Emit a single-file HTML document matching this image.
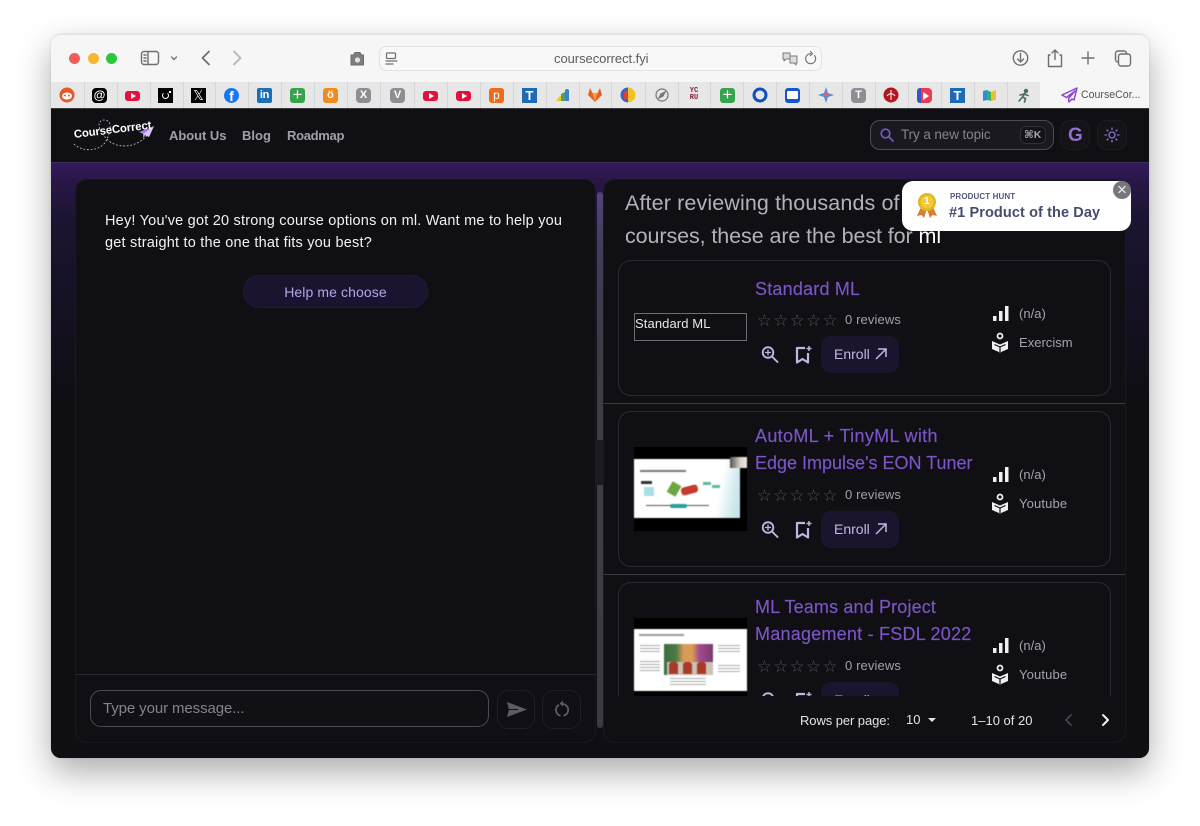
<!DOCTYPE html>
<html><head><meta charset="utf-8"><title>CourseCorrect</title>
<style>
*{box-sizing:border-box;margin:0;padding:0}
html,body{width:1200px;height:826px;overflow:hidden;background:#fff;font-family:"Liberation Sans","DejaVu Sans",sans-serif}
.a{position:absolute}
.t{position:absolute;white-space:nowrap}
#win{position:absolute;left:51px;top:34px;width:1098px;height:724px;border-radius:10px;box-shadow:0 14px 34px rgba(0,0,0,.33),0 0 2px rgba(0,0,0,.12)}
.title{color:#7c55c8;font-size:18px;letter-spacing:.05px;-webkit-text-stroke:.15px #7c55c8}
.rev{color:#a3a1a8;font-size:13px;letter-spacing:.12px}
.meta{color:#a5a3aa;font-size:13px;letter-spacing:.02px}
.stars{position:absolute;white-space:nowrap;color:#55545a;font-size:16.5px;letter-spacing:1.6px}
.card{position:absolute;left:618px;width:493px;border:1px solid #2b2a31;border-radius:13px;background:#100f14}
.enr{position:absolute;width:76px;height:35px;border-radius:9px;background:#1a142c;box-shadow:0 0 0 1px #1a1630;color:#c6b6e6;font-size:14px;letter-spacing:0;line-height:34px;padding-left:12px}
.fav{position:absolute;top:88px;width:15px;height:15px;border-radius:3px;color:#fff;font-size:11px;font-weight:bold;text-align:center;line-height:15px}
.sep{position:absolute;top:82px;width:1px;height:26px;background:#d6d6d6}
.blur{filter:blur(.6px)}
</style></head><body>
<div id="win"></div>

<!-- toolbar -->
<div class="a" style="left:51px;top:34px;width:1098px;height:48px;background:#f6f6f6;border-radius:10px 10px 0 0;border-top:1px solid #e2e2e2"></div>
<div class="a" style="left:51px;top:82px;width:989px;height:26px;background:#e7e7e7"></div>
<div class="a" style="left:1040px;top:82px;width:109px;height:26px;background:#f6f6f6"></div>
<div class="a" style="left:69px;top:53px;width:11px;height:11px;border-radius:50%;background:#ef5f58"></div>
<div class="a" style="left:88px;top:53px;width:11px;height:11px;border-radius:50%;background:#f5b72f"></div>
<div class="a" style="left:106px;top:53px;width:11px;height:11px;border-radius:50%;background:#2fc440"></div>

<svg class="a" style="left:0;top:0" width="1200" height="110" fill="none" stroke="#6f6f6f" stroke-width="1.4" stroke-linecap="round" stroke-linejoin="round">
 <rect x="141.5" y="51.5" width="17" height="13" rx="2.5"/><path d="M148 52v12M144 55h2M144 58h2M144 61h2"/>
 <path d="M171.500 57l2.500 2.500 2.500-2.500" stroke-width="1.3"/>
 <path d="M209 51.500l-6.500 6.500 6.500 6.500" stroke-width="1.8"/>
 <path d="M234 51.500l6.500 6.500-6.500 6.500" stroke="#b4b4b4" stroke-width="1.800"/>
 <path d="M351 55h2.500l1.500-2.500h5l1.500 2.500h2v10h-12.500z" fill="#7d7d7d" stroke="#6a6a6a" stroke-width="1"/><circle cx="357.500" cy="60" r="2.600" fill="#e2e2e2" stroke="none"/>
 <circle cx="1020.500" cy="58" r="7.200"/><path d="M1020.500 53.500v8.500M1017.500 59l3 3 3-3"/>
 <path d="M1050 55h-1.500v11.500h13V55H1060M1055 59.500V50M1052 53l3-3 3 3"/>
 <path d="M1088 52v12M1082 58h12"/>
 <rect x="1115.500" y="51" width="11" height="11" rx="2.500"/><rect x="1118.500" y="54" width="12" height="12" rx="2.500" fill="#f6f6f6"/>
</svg>
<div class="a" style="left:379px;top:46px;width:443px;height:25px;border:1px solid #e3e3e3;border-radius:7px;background:#f8f8f8"></div>
<svg class="a" style="left:0;top:0" width="1200" height="110" fill="none" stroke="#6f6f6f" stroke-width="1.200" stroke-linecap="round" stroke-linejoin="round">
 <rect x="386.500" y="53" width="9" height="5.500" rx="1"/><path d="M386 61h11M386 64h7"/>
 <path d="M783 53h7v6h-4l-2 2v-2h-1zM790 56h7v7h-1v2l-2-2h-4z" fill="#dcdcdc" stroke="#7a7a7a" stroke-width="1"/>
 <path d="M814.500 55.500a5 5 0 1 1-4-1.800M810.500 51.500l2 2.200-2.200 2" stroke-width="1.100"/>
</svg>
<div class="t" style="left:554px;top:51px;font-size:13px;color:#5c5c5c;letter-spacing:-.05px">coursecorrect.fyi</div>

<!-- separators -->
<div class="sep" style="left:84px"></div><div class="sep" style="left:117px"></div><div class="sep" style="left:150px"></div><div class="sep" style="left:183px"></div><div class="sep" style="left:215px"></div><div class="sep" style="left:248px"></div><div class="sep" style="left:281px"></div><div class="sep" style="left:314px"></div><div class="sep" style="left:347px"></div><div class="sep" style="left:380px"></div><div class="sep" style="left:414px"></div><div class="sep" style="left:447px"></div><div class="sep" style="left:480px"></div><div class="sep" style="left:513px"></div><div class="sep" style="left:546px"></div><div class="sep" style="left:579px"></div><div class="sep" style="left:611px"></div><div class="sep" style="left:645px"></div><div class="sep" style="left:678px"></div><div class="sep" style="left:710px"></div><div class="sep" style="left:743px"></div><div class="sep" style="left:776px"></div><div class="sep" style="left:809px"></div><div class="sep" style="left:842px"></div><div class="sep" style="left:875px"></div><div class="sep" style="left:908px"></div><div class="sep" style="left:941px"></div><div class="sep" style="left:974px"></div><div class="sep" style="left:1007px"></div>

<!-- favicons -->
<svg class="a" style="left:59px;top:87px" width="16" height="16" viewBox="0 0 16 16"><circle cx="8" cy="8" r="7.500" fill="#e8572a"/><ellipse cx="8" cy="9" rx="5" ry="3.500" fill="#fff"/><circle cx="6" cy="8.500" r="1" fill="#e8572a"/><circle cx="10" cy="8.500" r="1" fill="#e8572a"/></svg>
<div class="fav" style="left:92px;background:#000;border-radius:4px;font-size:12px;line-height:15px">@</div>
<div class="fav" style="left:125px;top:91px;height:10px;background:#e3103f"></div><div class="a" style="left:131px;top:93px;border-left:5px solid #fff;border-top:3px solid transparent;border-bottom:3px solid transparent"></div>
<div class="fav" style="left:158px;background:#000;border-radius:0"></div><div class="a" style="left:162px;top:92px;width:7px;height:7px;border:1px solid #fff;border-radius:50%;border-top-color:transparent"></div><div class="a" style="left:169px;top:91px;width:2px;height:2px;background:#fff"></div>
<div class="fav" style="left:191px;background:#000;border-radius:0;font-weight:normal;font-size:13px">𝕏</div>
<div class="fav" style="left:224px;background:#1877f2;border-radius:50%;font-size:14px;line-height:17px;overflow:hidden">f</div>
<div class="fav" style="left:257px;background:#1c6fb5;border-radius:2px;font-size:11px;letter-spacing:-.3px">in</div>
<div class="fav" style="left:290px;background:#37a34e;font-weight:normal;font-size:17px;line-height:14px">+</div>
<div class="fav" style="left:323px;background:#f18a1f;font-size:11px">ö</div>
<div class="fav" style="left:356px;background:#8d8d93;border-radius:4px">X</div>
<div class="fav" style="left:390px;background:#8d8d93;border-radius:4px">V</div>
<div class="fav" style="left:423px;top:91px;height:10px;background:#e3103f"></div><div class="a" style="left:429px;top:93px;border-left:5px solid #fff;border-top:3px solid transparent;border-bottom:3px solid transparent"></div>
<div class="fav" style="left:456px;top:91px;height:10px;background:#e3103f"></div><div class="a" style="left:462px;top:93px;border-left:5px solid #fff;border-top:3px solid transparent;border-bottom:3px solid transparent"></div>
<div class="fav" style="left:489px;background:#ec6c1c;font-weight:normal;font-size:12px">p</div>
<div class="fav" style="left:522px;background:#1f6ab4;border-radius:0;font-size:13px">T</div>
<svg class="a" style="left:555px;top:87px" width="16" height="16"><path d="M1 14l4-5 3 1v4z" fill="#f2c230"/><path d="M6 14V7l4-2v9z" fill="#4aa35a"/><path d="M10 14V3q2-2 4 0v11z" fill="#3f7fd8"/></svg>
<svg class="a" style="left:587px;top:87px" width="16" height="16"><path d="M3 1l2.500 5h5L13 1l2 7-7 7-7-7z" fill="#e6612a"/><path d="M5.500 6h5L8 14.500z" fill="#f8a03b"/></svg>
<svg class="a" style="left:620px;top:87px" width="16" height="16"><circle cx="8" cy="8" r="7.500" fill="#f3c21f"/><path d="M8 .5a7.500 7.500 0 0 0 0 15z" fill="#3c63c9"/><path d="M4 4h4v8H4z" fill="#d8433e"/></svg>
<svg class="a" style="left:654px;top:87px" width="16" height="16" fill="none" stroke="#777" stroke-width="1.200"><circle cx="8" cy="8" r="6"/><path d="M11 5L9 9 5 11l2-4z" fill="#777"/></svg>
<div class="t" style="left:688px;top:88px;font-size:7px;line-height:7px;color:#8b1d33;font-family:'Liberation Mono',monospace;font-weight:bold;width:12px;text-align:center;white-space:normal">YC<br>RU</div>
<div class="fav" style="left:720px;background:#37a34e;font-weight:normal;font-size:17px;line-height:14px">+</div>
<svg class="a" style="left:752px;top:87px" width="16" height="16" fill="none"><circle cx="8" cy="8" r="6" stroke="#0f4fc2" stroke-width="3"/></svg>
<div class="a" style="left:785px;top:88px;width:15px;height:15px;border-radius:3px;background:#1556c9;border:2px solid #1556c9;border-bottom-width:3px"><div style="height:8px;margin-top:1px;background:#fff;border-radius:1px"></div></div>
<svg class="a" style="left:818px;top:87px" width="16" height="16"><path d="M8 0l2 6 6 2-6 2-2 6-2-6-6-2 6-2z" fill="#4a8ee8"/><path d="M8 4l1 3 3 1-3 1-1 3-1-3-3-1 3-1z" fill="#e8605a"/></svg>
<div class="fav" style="left:851px;background:#8d8d93;border-radius:4px">T</div>
<svg class="a" style="left:883px;top:87px" width="16" height="16"><circle cx="8" cy="8" r="7.500" fill="#b3161e"/><path d="M8 3v10M4 9c2-3 6-3 8 0" stroke="#fff" fill="none"/></svg>
<div class="fav" style="left:917px;background:#e83c54;border-radius:4px"></div><div class="a" style="left:917px;top:88px;width:4px;height:15px;background:#3756c6;border-radius:3px 0 0 3px"></div><div class="a" style="left:923px;top:92px;border-left:6px solid #fff;border-top:4px solid transparent;border-bottom:4px solid transparent"></div>
<div class="fav" style="left:950px;background:#1f6ab4;border-radius:0;font-size:13px">T</div>
<svg class="a" style="left:982px;top:88px" width="16" height="14"><path d="M1 3l4-1v10l-4 1z" fill="#2d8fd8"/><path d="M5 2l4 2v9l-4-1z" fill="#3dae63"/><path d="M9 4l5-2v10l-5 1z" fill="#efbf30"/></svg>
<svg class="a" style="left:1016px;top:88px" width="15" height="15" fill="none" stroke="#4a6a60" stroke-width="1.600" stroke-linecap="round"><circle cx="10" cy="3" r="1.400" fill="#4a6a60"/><path d="M9 5L6.500 9l3 1.500-1 3.500M6.500 9L3 13M8 6l4 1.500M8 6L4 7"/></svg>
<svg class="a" style="left:1061px;top:87px" width="17" height="16" fill="none" stroke="#8a45d8" stroke-width="1.500" stroke-linejoin="round"><path d="M16 1L1 8l4.500 2.500L14 4l-6.500 7.500L8 15l3-3 2 1z"/></svg>
<div class="t" style="left:1081px;top:89px;font-size:10.6px;color:#555;letter-spacing:0">CourseCor...</div>

<!-- app header -->
<div class="a" style="left:51px;top:108px;width:1098px;height:650px;background:#100f14;border-radius:0 0 10px 10px;overflow:hidden">
 <div class="a" style="left:0;top:54px;width:1098px;height:596px;background:linear-gradient(180deg,#331b60 0,#291748 18px,#1b1430 60px,#0f0e13 240px)"></div>
 <div class="a" style="left:0;top:54px;width:1098px;height:1px;background:#3a2f52"></div>
</div>
<div class="a" style="left:51px;top:108px;width:1098px;height:1px;background:#3a3a3e"></div>

<!-- logo -->
<svg class="a" style="left:70px;top:117px" width="90" height="38" fill="none"><path d="M4 27C12 35 30 35 36 24 42 12 42 3 34 3 26 3 28 14 37 22 44 31 68 34 80 14" stroke="#cfcfd6" stroke-width=".8" stroke-dasharray="1.800 1.800"/><path d="M84 9L69 15l4 2 0 4 3-3 3 2z" fill="#a377e8"/><path d="M84 9L73 17l6 3z" fill="#d9c6f7"/></svg>
<div class="t" style="left:74px;top:129px;color:#fff;font-size:11.3px;font-weight:bold;transform:rotate(-7deg);transform-origin:left center;letter-spacing:-.1px">CourseCorrect</div>

<div class="t" style="left:169px;top:128px;font-size:13px;font-weight:bold;color:#a1a0a8;letter-spacing:-.05px">About Us</div>
<div class="t" style="left:242px;top:128px;font-size:13px;font-weight:bold;color:#a1a0a8;letter-spacing:0">Blog</div>
<div class="t" style="left:287px;top:128px;font-size:13px;font-weight:bold;color:#a1a0a8;letter-spacing:-.3px">Roadmap</div>

<!-- search -->
<div class="a" style="left:870px;top:120px;width:184px;height:30px;border:1px solid #4c4b52;border-radius:10px;background:#1a1920"></div>
<svg class="a" style="left:879px;top:127px" width="16" height="16" fill="none" stroke="#7d55c7" stroke-width="1.700" stroke-linecap="round"><circle cx="6.500" cy="6.500" r="4.300"/><path d="M10 10l4 4"/></svg>
<div class="t" style="left:901px;top:127px;font-size:13.5px;color:#85848b;letter-spacing:-.1px">Try a new topic</div>
<div class="a" style="left:1020px;top:126px;width:26px;height:18px;border:1px solid #302f36;border-radius:6px;background:#141318"></div>
<div class="t" style="left:1024px;top:129px;font-size:10.5px;font-weight:bold;color:#a8a7ae">⌘K</div>
<div class="a" style="left:1060px;top:120px;width:30px;height:30px;border:1px solid #1c1b21;border-radius:10px;background:#141318"></div>
<div class="t" style="left:1068px;top:125px;font-size:19px;font-weight:bold;color:#8f6fd0">G</div>
<div class="a" style="left:1097px;top:120px;width:30px;height:30px;border:1px solid #1c1b21;border-radius:10px;background:#141318"></div>
<svg class="a" style="left:1103px;top:126px" width="18" height="18" fill="none" stroke="#8f6fd0" stroke-width="1.300" stroke-linecap="round"><circle cx="9" cy="9" r="3"/><path d="M9 2v1.500M9 14.500V16M2 9h1.500M14.500 9H16M4 4l1 1M13 13l1 1M4 14l1-1M13 5l1-1"/></svg>

<!-- left panel -->
<div class="a" style="left:75px;top:179px;width:521px;height:564px;background:#100f14;border:1px solid #1a1920;border-radius:12px"></div>
<div class="t" style="left:105px;top:210px;width:480px;white-space:normal;color:#f2f2f4;font-size:14.5px;line-height:22px;letter-spacing:.21px">Hey! You've got 20 strong course options on ml. Want me to help you<br>get straight to the one that fits you best?</div>
<div class="a" style="left:244px;top:276px;width:183px;height:31px;border-radius:15px;background:#1a1430;box-shadow:0 0 0 1px #1f1a38"></div>
<div class="t" style="left:244px;width:183px;top:284px;text-align:center;color:#b9a3e6;font-size:14px;letter-spacing:.1px">Help me choose</div>
<div class="a" style="left:76px;top:674px;width:519px;height:1px;background:#2a2930"></div>
<div class="a" style="left:90px;top:690px;width:399px;height:37px;border:1px solid #4c4b52;border-radius:11px;background:#111015"></div>
<div class="t" style="left:103px;top:700px;font-size:15px;color:#85848b;letter-spacing:-.1px">Type your message...</div>
<div class="a" style="left:497px;top:690px;width:38px;height:39px;border:1px solid #1f1e25;border-radius:11px"></div>
<svg class="a" style="left:506px;top:701px" width="22" height="17"><path d="M1 1l20 7.500-20 7.500 2-7.500-2-7.500z" fill="#5d5c62"/><path d="M3 8.500h9" stroke="#100f14" stroke-width="1"/></svg>
<div class="a" style="left:542px;top:690px;width:39px;height:39px;border:1px solid #1f1e25;border-radius:11px"></div>
<svg class="a" style="left:553px;top:699px" width="18" height="20" fill="none" stroke="#5d5c62" stroke-width="1.800"><path d="M10 5A6 6 0 0 1 10.500 16.800M7.500 16.800A6 6 0 0 1 6 5.800"/><path d="M10 1.500L6.500 4.500 10 7.500z" fill="#5d5c62" stroke="none"/></svg>

<!-- divider scrollbar -->
<div class="a" style="left:597px;top:192px;width:6px;height:536px;background:linear-gradient(180deg,#53447e 0,#443d5c 50px,#3d3c45 150px,#3c3b42 100%);border-radius:3px"></div>
<div class="a" style="left:596px;top:440px;width:7px;height:45px;background:#1b1a20"></div>

<!-- right panel -->
<div class="a" style="left:603px;top:179px;width:523px;height:564px;background:#100f14;border:1px solid #1a1920;border-radius:12px"></div>
<div class="t" style="left:625px;top:187px;font-size:21.5px;line-height:33px;color:#b3b2b8;white-space:nowrap;letter-spacing:.12px">After reviewing thousands of<br><span style="letter-spacing:-.09px">courses, these are the best for <span style="color:#fff">ml</span></span></div>

<div class="a" style="left:604px;top:260px;width:521px;height:436px;overflow:hidden" id="list">
 <div class="a" style="left:0;top:143px;width:521px;height:1px;background:#3b3a40"></div>
 <div class="a" style="left:0;top:314px;width:521px;height:1px;background:#3b3a40"></div>
 <div class="card" style="left:14px;top:0;height:136px"></div>
 <div class="card" style="left:14px;top:151px;height:156px"></div>
 <div class="card" style="left:14px;top:322px;height:156px"></div>

 <!-- card 1 -->
 <div class="a" style="left:30px;top:53px;width:113px;height:28px;border:1px solid #6d6c72;color:#e9e9ea;font-size:13px;line-height:20px;letter-spacing:.1px">Standard ML</div>
 <div class="t title" style="left:151px;top:19px;letter-spacing:.2px">Standard ML</div>
 <div class="stars" style="left:153px;top:51px">☆☆☆☆☆</div>
 <div class="t rev" style="left:241px;top:52px">0 reviews</div>
 <svg class="a" style="left:156px;top:85px" width="20" height="20" fill="none" stroke="#c3b5e2" stroke-width="1.900" stroke-linecap="round"><circle cx="8" cy="7.500" r="5.300"/><path d="M12 11.500l5.500 5.500"/><path d="M8 5v5M5.500 7.500h5" stroke-width="1.300"/></svg>
 <svg class="a" style="left:191px;top:85px" width="18" height="20" fill="none" stroke="#c3b5e2" stroke-width="2.200" stroke-linejoin="round"><path d="M10 3H2v14.500l5.500-3.500 5.500 3.500V8"/><path d="M14 1v5M11.500 3.500h5" stroke-width="1.500"/></svg>
 <div class="enr" style="left:218px;top:77px">Enroll</div>
 <svg class="a" style="left:270px;top:87px" width="14" height="14" fill="none" stroke="#c6b6e6" stroke-width="1.500"><path d="M2 12L12 2M4 2h8v8"/></svg>
 <svg class="a" style="left:388px;top:45px" width="18" height="17"><rect x="1" y="11" width="3.500" height="5" fill="#f0f0f2"/><rect x="7" y="6" width="3.500" height="10" fill="#f0f0f2"/><rect x="13" y="1" width="3.500" height="15" fill="#f0f0f2"/></svg>
 <div class="t meta" style="left:415px;top:46px">(n/a)</div>
 <svg class="a" style="left:387px;top:72px" width="18" height="21"><circle cx="9" cy="4" r="2.500" fill="none" stroke="#f0f0f2" stroke-width="1.800"/><path d="M1 9l8 3.500L17 9v8l-8 3.500L1 17z" fill="#f0f0f2"/><path d="M3.500 12.500L9 15l5.500-2.500M9 15v5" fill="none" stroke="#100f14" stroke-width="1.200"/></svg>
 <div class="t meta" style="left:415px;top:75px">Exercism</div>

 <!-- card 2 -->
 <div class="a" style="left:30px;top:187px;width:113px;height:84px;background:#000"></div>
 <div class="a blur" style="left:30px;top:199px;width:106px;height:59px;background:#fff;overflow:hidden">
  <div class="a" style="right:-3px;top:0;width:30px;height:59px;background:linear-gradient(100deg,#fff 30%,#cfe9ec 70%,#bfe0ea)"></div>
  <div class="a" style="left:6px;top:11px;width:46px;height:2px;background:#777"></div>
  <div class="a" style="left:7px;top:22px;width:11px;height:3px;background:#333"></div>
  <div class="a" style="left:10px;top:28px;width:10px;height:9px;background:#a8dfe4"></div>
  <div class="a" style="left:35px;top:24px;width:10px;height:12px;background:#6da53e;transform:rotate(30deg)"></div>
  <div class="a" style="left:47px;top:27px;width:17px;height:8px;background:#c53b2c;border-radius:3px;transform:rotate(-15deg)"></div>
  <div class="a" style="left:69px;top:23px;width:8px;height:3px;background:#5fb89a"></div>
  <div class="a" style="left:78px;top:26px;width:8px;height:3px;background:#5fb89a"></div>
  <div class="a" style="left:12px;top:46px;width:63px;height:1px;background:#555"></div>
  <div class="a" style="left:36px;top:45px;width:17px;height:4px;background:#2a9d9d;border-radius:2px"></div>
 </div>
 <div class="a blur" style="left:126px;top:197px;width:17px;height:11px;background:linear-gradient(90deg,#55504c,#d7d2ca 60%,#ece9e3)"></div>
 <div class="t title" style="left:151px;top:163px;line-height:27px;letter-spacing:0"><span style="letter-spacing:.33px">AutoML + TinyML with</span><br>Edge Impulse's EON Tuner</div>
 <div class="stars" style="left:153px;top:226px">☆☆☆☆☆</div>
 <div class="t rev" style="left:241px;top:227px">0 reviews</div>
 <svg class="a" style="left:156px;top:260px" width="20" height="20" fill="none" stroke="#c3b5e2" stroke-width="1.900" stroke-linecap="round"><circle cx="8" cy="7.500" r="5.300"/><path d="M12 11.500l5.500 5.500"/><path d="M8 5v5M5.500 7.500h5" stroke-width="1.300"/></svg>
 <svg class="a" style="left:191px;top:260px" width="18" height="20" fill="none" stroke="#c3b5e2" stroke-width="2.200" stroke-linejoin="round"><path d="M10 3H2v14.500l5.500-3.500 5.500 3.500V8"/><path d="M14 1v5M11.500 3.500h5" stroke-width="1.500"/></svg>
 <div class="enr" style="left:218px;top:252px">Enroll</div>
 <svg class="a" style="left:270px;top:262px" width="14" height="14" fill="none" stroke="#c6b6e6" stroke-width="1.500"><path d="M2 12L12 2M4 2h8v8"/></svg>
 <svg class="a" style="left:388px;top:206px" width="18" height="17"><rect x="1" y="11" width="3.500" height="5" fill="#f0f0f2"/><rect x="7" y="6" width="3.500" height="10" fill="#f0f0f2"/><rect x="13" y="1" width="3.500" height="15" fill="#f0f0f2"/></svg>
 <div class="t meta" style="left:415px;top:207px">(n/a)</div>
 <svg class="a" style="left:387px;top:233px" width="18" height="21"><circle cx="9" cy="4" r="2.500" fill="none" stroke="#f0f0f2" stroke-width="1.800"/><path d="M1 9l8 3.500L17 9v8l-8 3.500L1 17z" fill="#f0f0f2"/><path d="M3.500 12.500L9 15l5.500-2.500M9 15v5" fill="none" stroke="#100f14" stroke-width="1.200"/></svg>
 <div class="t meta" style="left:415px;top:236px;letter-spacing:.15px">Youtube</div>

 <!-- card 3 -->
 <div class="a" style="left:30px;top:358px;width:113px;height:78px;background:#000"></div>
 <div class="a blur" style="left:30px;top:369px;width:113px;height:62px;background:#fff;overflow:hidden">
  <div class="a" style="left:5px;top:5px;width:45px;height:2px;background:#999"></div>
  <div class="a" style="left:30px;top:15px;width:49px;height:31px;background:linear-gradient(90deg,#3e6d3e 0,#4d7a45 25%,#d99b55 40%,#d99b55 58%,#a34b8c 72%,#7a3a70)"></div>
  <div class="a" style="left:33px;top:33px;width:46px;height:13px;background:#c9c2b6"></div>
  <div class="a" style="left:35px;top:33px;width:9px;height:12px;background:#a83a26;border-radius:3px 3px 0 0"></div>
  <div class="a" style="left:49px;top:33px;width:9px;height:12px;background:#a83a26;border-radius:3px 3px 0 0"></div>
  <div class="a" style="left:63px;top:33px;width:9px;height:12px;background:#a83a26;border-radius:3px 3px 0 0"></div>
  <div class="a" style="left:6px;top:16px;width:20px;height:9px;background:repeating-linear-gradient(180deg,#aaa 0,#aaa 1px,#fff 1px,#fff 3px)"></div>
  <div class="a" style="left:6px;top:32px;width:20px;height:12px;background:repeating-linear-gradient(180deg,#aaa 0,#aaa 1px,#fff 1px,#fff 3px)"></div>
  <div class="a" style="left:84px;top:16px;width:22px;height:9px;background:repeating-linear-gradient(180deg,#aaa 0,#aaa 1px,#fff 1px,#fff 3px)"></div>
  <div class="a" style="left:84px;top:36px;width:22px;height:7px;background:repeating-linear-gradient(180deg,#aaa 0,#aaa 1px,#fff 1px,#fff 3px)"></div>
  <div class="a" style="left:36px;top:49px;width:36px;height:9px;background:repeating-linear-gradient(180deg,#aaa 0,#aaa 1px,#fff 1px,#fff 3px)"></div>
 </div>
 <div class="t title" style="left:151px;top:334px;line-height:27px;letter-spacing:.15px">ML Teams and Project<br><span style="letter-spacing:.23px">Management - FSDL 2022</span></div>
 <div class="stars" style="left:153px;top:397px">☆☆☆☆☆</div>
 <div class="t rev" style="left:241px;top:398px">0 reviews</div>
 <svg class="a" style="left:156px;top:431px" width="20" height="20" fill="none" stroke="#c3b5e2" stroke-width="1.900" stroke-linecap="round"><circle cx="8" cy="7.500" r="5.300"/><path d="M12 11.500l5.500 5.500"/></svg>
 <svg class="a" style="left:191px;top:431px" width="18" height="20" fill="none" stroke="#c3b5e2" stroke-width="2.200" stroke-linejoin="round"><path d="M10 3H2v14.500l5.500-3.500 5.500 3.500V8"/><path d="M14 1v5M11.500 3.500h5" stroke-width="1.500"/></svg>
 <div class="enr" style="left:218px;top:423px">Enroll</div>
 <svg class="a" style="left:388px;top:377px" width="18" height="17"><rect x="1" y="11" width="3.500" height="5" fill="#f0f0f2"/><rect x="7" y="6" width="3.500" height="10" fill="#f0f0f2"/><rect x="13" y="1" width="3.500" height="15" fill="#f0f0f2"/></svg>
 <div class="t meta" style="left:415px;top:378px">(n/a)</div>
 <svg class="a" style="left:387px;top:404px" width="18" height="21"><circle cx="9" cy="4" r="2.500" fill="none" stroke="#f0f0f2" stroke-width="1.800"/><path d="M1 9l8 3.500L17 9v8l-8 3.500L1 17z" fill="#f0f0f2"/><path d="M3.500 12.500L9 15l5.500-2.500M9 15v5" fill="none" stroke="#100f14" stroke-width="1.200"/></svg>
 <div class="t meta" style="left:415px;top:407px;letter-spacing:.15px">Youtube</div>
</div>

<!-- pagination -->
<div class="t" style="left:800px;top:713px;font-size:13px;color:#e4e4e6;letter-spacing:-.08px">Rows per page:</div>
<div class="t" style="left:906px;top:712px;font-size:13px;color:#e4e4e6">10</div>
<div class="a" style="left:928px;top:718px;border-top:4px solid #e4e4e6;border-left:4px solid transparent;border-right:4px solid transparent"></div>
<div class="t" style="left:971px;top:713px;font-size:13px;color:#e4e4e6;letter-spacing:0">1–10 of 20</div>
<svg class="a" style="left:1060px;top:712px" width="54" height="16" fill="none" stroke-linecap="round" stroke-linejoin="round" stroke-width="1.800"><path d="M11 3L6 8l5 5" stroke="#47464c"/><path d="M43 3l5 5-5 5" stroke="#f2f2f4" stroke-width="2"/></svg>

<!-- PH badge -->
<div class="a" style="left:902px;top:181px;width:229px;height:50px;background:#fff;border-radius:11px"></div>
<svg class="a" style="left:915px;top:192px" width="24" height="27"><path d="M6 15l-4 9 4.500-1 2.500 3 3-9z" fill="#d97c36"/><path d="M18 15l4 9-4.500-1-2.500 3-3-9z" fill="#d97c36"/><circle cx="12" cy="10" r="9" fill="#e2b71f"/><circle cx="12" cy="10" r="6.500" fill="#f0ca3b"/></svg>
<div class="t" style="left:924px;top:196px;color:#fff;font-size:10px;font-weight:bold">1</div>
<div class="t" style="left:950px;top:192px;font-size:8px;font-weight:bold;color:#50577f;letter-spacing:.1px">PRODUCT HUNT</div>
<div class="t" style="left:949px;top:205px;font-size:14.5px;font-weight:bold;color:#454c6e;letter-spacing:.1px">#1 Product of the Day</div>
<div class="a" style="left:1113px;top:181px;width:18px;height:18px;border-radius:50%;background:#77777b"></div>
<svg class="a" style="left:1113px;top:181px" width="18" height="18" stroke="#e6e6e6" stroke-width="1.400" stroke-linecap="round"><path d="M6 5.500l6 6M12 5.500l-6 6"/></svg>
</body></html>
